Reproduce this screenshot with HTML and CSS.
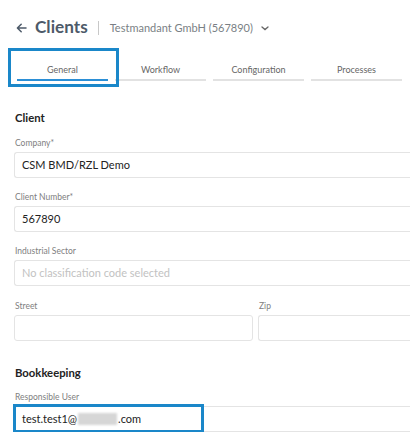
FILE: index.html
```html
<!DOCTYPE html>
<html>
<head>
<meta charset="utf-8">
<link rel="stylesheet" href="styles.css">
</head>
<body>
<div class="page">
  <div class="header">
    <svg class="back" width="11" height="10" viewBox="0 0 11 10"><path d="M10 5H1.5M5.2 1.2L1.4 5l3.8 3.8" fill="none" stroke="#4d5a69" stroke-width="1.5" stroke-linecap="round" stroke-linejoin="round"/></svg>
    <span class="title">Clients</span>
    <span class="divider"></span>
    <span class="subtitle">Testmandant GmbH (567890)</span>
    <svg class="chev" width="8" height="5" viewBox="0 0 8 5"><path d="M1 1l3 2.6L7 1" fill="none" stroke="#666" stroke-width="1.3" stroke-linecap="round"/></svg>
  </div>

  <div class="tabs">
    <div class="tab active">General</div>
    <div class="tab">Workflow</div>
    <div class="tab">Configuration</div>
    <div class="tab">Processes</div>
    <div class="mark mark-tab"></div>
  </div>

  <div class="form">
    <h2 class="section">Client</h2>
    <div class="field">
      <div class="label">Company*</div>
      <div class="input">CSM BMD/RZL Demo</div>
    </div>
    <div class="field">
      <div class="label">Client Number*</div>
      <div class="input">567890</div>
    </div>
    <div class="field">
      <div class="label">Industrial Sector</div>
      <div class="input placeholder">No classification code selected</div>
    </div>
    <div class="field row">
      <div class="col street">
        <div class="label">Street</div>
        <div class="input closed"></div>
      </div>
      <div class="col zip">
        <div class="label">Zip</div>
        <div class="input"></div>
      </div>
    </div>

    <h2 class="section section2">Bookkeeping</h2>
    <div class="field user">
      <div class="label">Responsible User</div>
      <div class="input">test.test1@<span class="redact"></span>.com</div>
      <div class="mark mark-user"></div>
    </div>
  </div>
</div>
</body>
</html>
```

FILE: styles.css
```css
html, body {
  margin: 0;
  padding: 0;
  background: #fff;
}
body {
  font-family: Lato, "Open Sans", sans-serif;
  color: #222;
}
.page {
  position: relative;
}
.header {
  display: flex;
  align-items: center;
  height: 24px;
  padding-top: 15px;
  padding-left: 16px;
}
.back {
  margin-right: 8px;
  margin-top: 1px;
}
.title {
  font-size: 17.2px;
  font-weight: 700;
  color: #4d5a69;
  line-height: 24px;
}
.divider {
  width: 1px;
  height: 14px;
  background: #c8c8c8;
  margin: 1px 11px 0 10px;
}
.subtitle {
  font-size: 11px;
  color: #7a7f85;
  line-height: 24px;
  margin-top: 1px;
}
.chev {
  margin-left: 8px;
  margin-top: 3px;
}
.tabs {
  position: relative;
  display: flex;
  gap: 7px;
  margin-top: 24px;
  padding-left: 17px;
}
.tab {
  width: 91px;
  text-align: center;
  font-size: 9px;
  line-height: 14px;
  color: #666;
  padding-bottom: 2px;
  border-bottom: 2px solid #e2e2e2;
}
.tab.active {
  border-bottom-color: #2b8fd6;
}
.mark {
  position: absolute;
  border: 3px solid #1a87c9;
  box-sizing: border-box;
}
.mark-tab {
  left: 8px;
  top: -15px;
  width: 111px;
  height: 39px;
}
.form {
  padding-left: 14px;
}
.section {
  margin: 28px 0 0 1px;
  font-size: 11.3px;
  font-weight: 700;
  line-height: 18px;
  color: #222;
}
.section2 {
  margin-top: 23px;
}
.field {
  margin-top: 9px;
  position: relative;
}
.field + .field {
  margin-top: 12px;
}
.field.row {
  margin-top: 13px;
  display: flex;
  gap: 5px;
}
.label {
  font-size: 8.5px;
  line-height: 14px;
  color: #808080;
  margin-left: 1px;
  margin-bottom: 2px;
}
.input {
  height: 26px;
  box-sizing: border-box;
  border: 1px solid #e4e4e4;
  border-right: none;
  border-radius: 3px 0 0 3px;
  padding-left: 7px;
  font-size: 11px;
  line-height: 24px;
  color: #222;
  display: flex;
  align-items: center;
}
.input.closed {
  border-right: 1px solid #e4e4e4;
  border-radius: 3px;
}
.input.placeholder {
  color: #c2c2c2;
}
.street {
  width: 239px;
}
.zip {
  flex: 1;
}
.user {
  margin-top: 8px;
}
.redact {
  display: inline-block;
  width: 39px;
  height: 12px;
  margin: 0 1px;
  background: #d6d6d6;
  filter: blur(1px);
}
.mark-user {
  left: -1px;
  top: 14px;
  width: 191px;
  height: 29px;
}
```
